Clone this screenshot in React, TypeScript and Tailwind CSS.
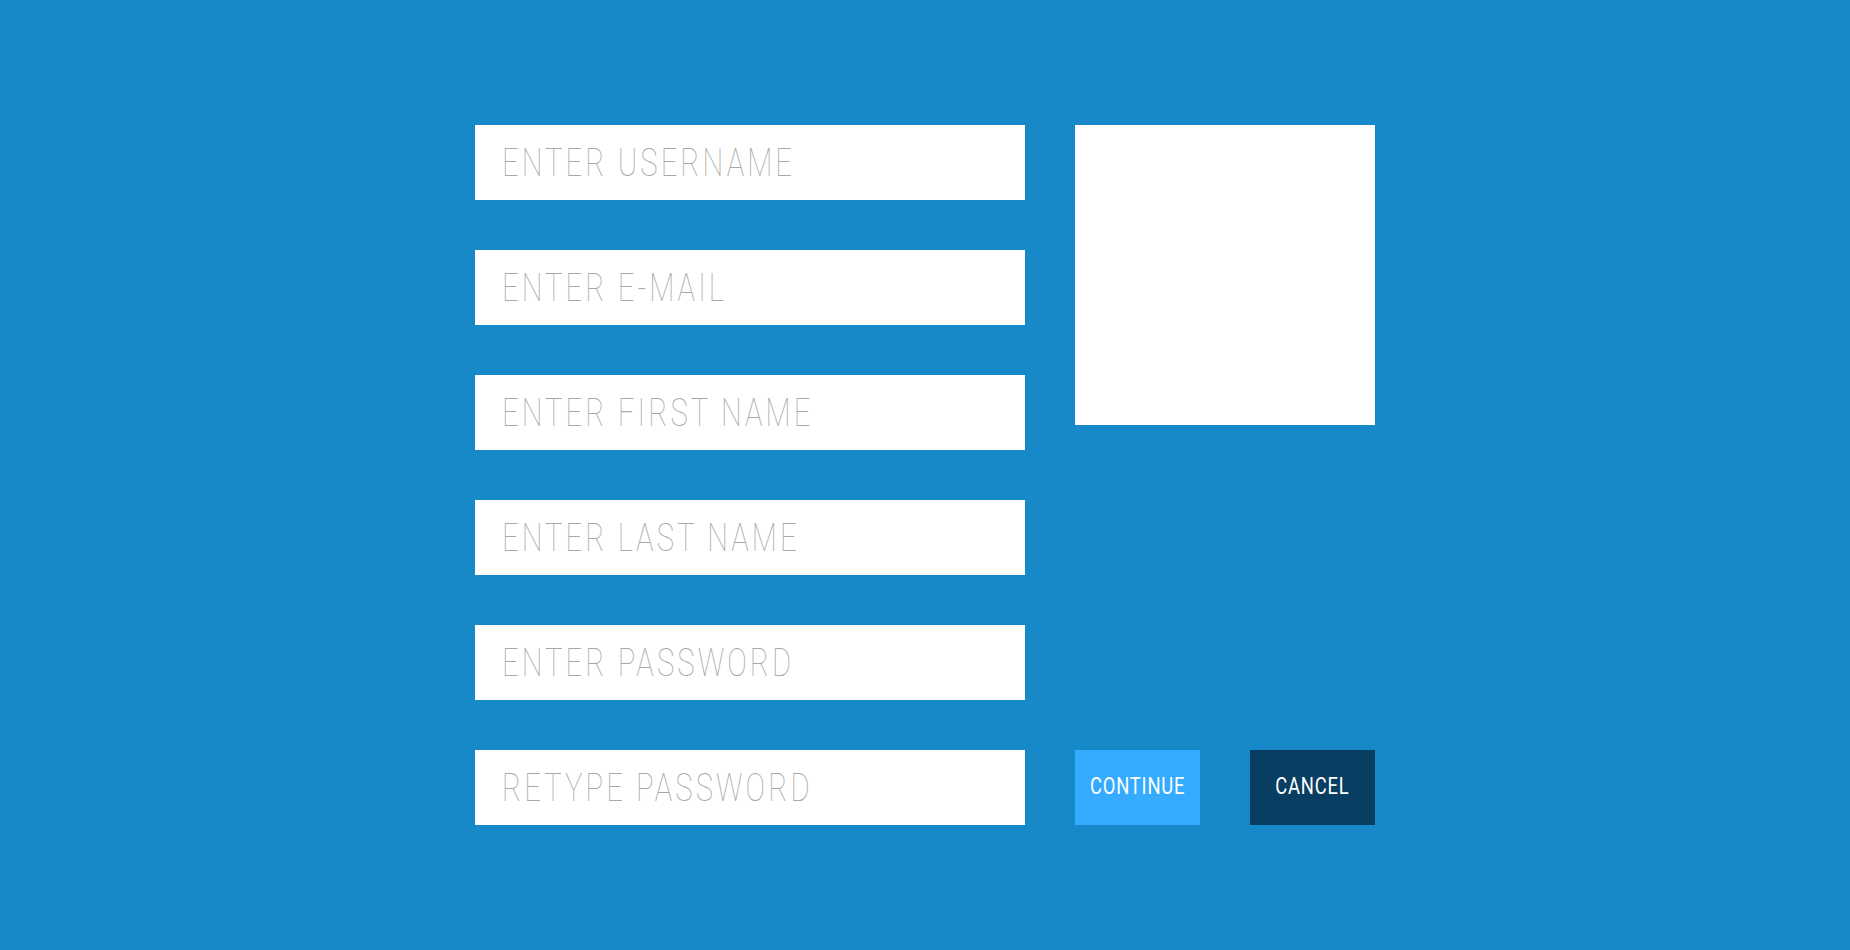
export default function App() {
  const fields = [
    'Enter Username',
    'Enter E-mail',
    'Enter First Name',
    'Enter Last Name',
    'Enter Password',
    'Retype Password',
  ];

  return (
    <div
      className="w-full h-[950px] bg-[#1788c8] flex items-center justify-center"
      style={{ fontFamily: 'Roboto, "Liberation Sans", sans-serif' }}
    >
      <div className="grid grid-cols-[550px_125px_125px] gap-x-[50px] gap-y-[50px]">
        {fields.map((f, i) => (
          <div key={f} className="col-start-1 h-[75px] bg-white overflow-hidden" style={{ gridRow: i + 1 }}>
            {/* condensed look: scale the field horizontally */}
            <input
              type={f.includes('Password') ? 'password' : 'text'}
              placeholder={f.toUpperCase()}
              className="w-[714px] h-full origin-left scale-x-[0.77] bg-transparent px-[35px] text-[38px] font-thin tracking-[4px] text-gray-500 placeholder:text-[#a8a8a8] outline-none"
            />
          </div>
        ))}
        <div className="col-start-2 col-span-2 row-start-1 row-span-3 h-[300px] bg-white" />
        <button className="col-start-2 row-start-6 h-[75px] bg-[#34abff] text-white text-[23px] font-normal">
          <span className="inline-block scale-x-[0.8] tracking-[1px]">CONTINUE</span>
        </button>
        <button className="col-start-3 row-start-6 h-[75px] bg-[#083e61] text-white text-[23px] font-normal">
          <span className="inline-block scale-x-[0.8] tracking-[1px]">CANCEL</span>
        </button>
      </div>
    </div>
  );
}
